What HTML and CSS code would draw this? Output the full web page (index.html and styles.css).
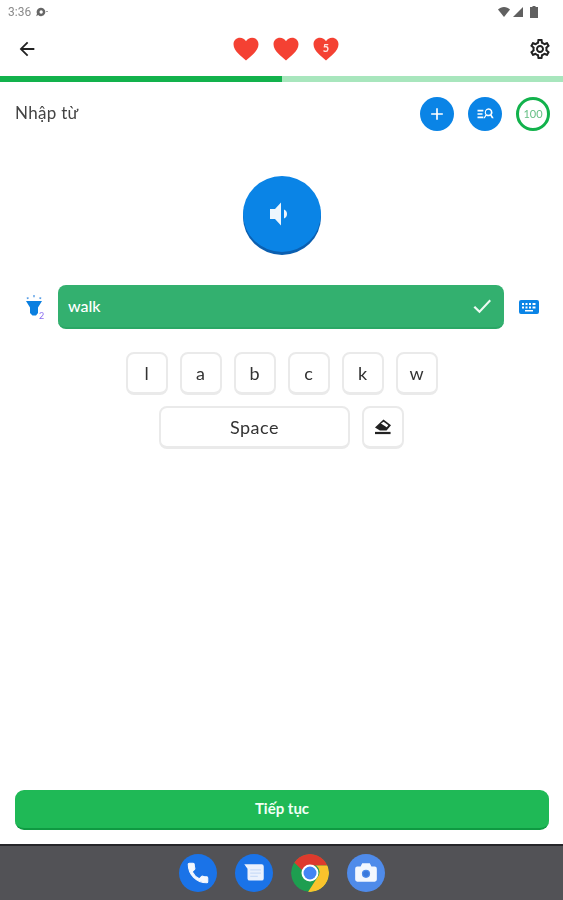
FILE: index.html
```html
<!DOCTYPE html>
<html lang="en">
<head>
  <meta charset="UTF-8">
  <title>Nhập từ</title>
  <link rel="stylesheet" href="styles.css">
</head>
<body>
  <svg class="defs" width="0" height="0">
    <symbol id="heart" viewBox="0 0 26 24">
      <path d="M13 23.5C9 19.6 .5 14.200 .5 7.300 .5 3.300 3.500 .8 6.900 .8c2.600 0 4.800 1.300 6.100 3.500C14.300 2.100 16.500 .8 19.100 .8c3.400 0 6.400 2.500 6.400 6.500 0 6.900-8.500 12.300-12.500 16.200z"/>
    </symbol>
  </svg>

  <div class="status-bar">
    <div class="status-left">
      <span class="clock">3:36</span>
      <svg class="status-note" viewBox="0 0 14 12" width="12" height="10"><path d="M6 1a5 5 0 1 1-3.600 8.500L0 11l1-3A5 5 0 0 1 6 1zm0 3a2 2 0 1 0 0 4 2 2 0 0 0 0-4zm6 1h2v1h-2z"/></svg>
    </div>
    <div class="status-right">
      <svg viewBox="0 0 12 10" width="12" height="10"><path d="M0 2.500C1.600 1 3.700 0 6 0s4.400 1 6 2.500L6 10z"/></svg>
      <svg viewBox="0 0 10 10" width="10" height="10"><path d="M10 0v10H0z"/></svg>
      <svg class="battery" viewBox="0 0 8 12" width="8" height="12"><path d="M2.500 0h3v1H8v11H0V1h2.500z"/></svg>
    </div>
  </div>

  <header class="toolbar">
    <svg class="icon-back" viewBox="0 0 24 24" width="22" height="22"><path d="M20 11H7.830l5.590-5.590L12 4l-8 8 8 8 1.410-1.410L7.830 13H20v-2z"/></svg>
    <div class="hearts">
      <svg class="heart"><use href="#heart"/></svg>
      <svg class="heart"><use href="#heart"/></svg>
      <div class="heart-count">
        <svg class="heart"><use href="#heart"/></svg>
        <span>5</span>
      </div>
    </div>
    <svg class="icon-settings" viewBox="0 0 24 24" width="24" height="24"><path d="M19.430 12.980c.04-.32.07-.64.07-.98 0-.34-.03-.66-.07-.98l2.110-1.650c.19-.15.24-.42.12-.64l-2-3.460c-.09-.16-.26-.25-.44-.25-.06 0-.12.01-.17.03l-2.490 1c-.52-.4-1.080-.73-1.690-.98l-.38-2.650C14.460 2.180 14.250 2 14 2h-4c-.25 0-.46.18-.49.42l-.38 2.650c-.61.25-1.170.59-1.690.98l-2.490-1c-.06-.02-.12-.03-.18-.03-.17 0-.34.09-.43.25l-2 3.460c-.13.22-.07.49.12.64l2.110 1.650c-.04.32-.07.65-.07.98 0 .33.03.66.07.98l-2.110 1.650c-.19.15-.24.42-.12.64l2 3.460c.09.16.26.25.44.25.06 0 .12-.01.17-.03l2.490-1c.52.4 1.080.73 1.690.98l.38 2.650c.03.24.24.42.49.42h4c.25 0 .46-.18.49-.42l.38-2.650c.61-.25 1.170-.59 1.690-.98l2.490 1c.06.02.12.03.18.03.17 0 .34-.09.43-.25l2-3.460c.12-.22.07-.49-.12-.64l-2.110-1.650zm-1.980-1.710c.04.31.05.52.05.73 0 .21-.02.43-.05.73l-.14 1.130.89.7 1.080.84-.7 1.210-1.270-.51-1.040-.42-.9.68c-.43.32-.84.56-1.250.73l-1.060.43-.16 1.130-.2 1.350h-1.400l-.19-1.350-.16-1.130-1.060-.43c-.43-.18-.83-.41-1.230-.71l-.91-.7-1.060.43-1.270.51-.7-1.210 1.080-.84.89-.7-.14-1.130c-.03-.31-.05-.54-.05-.74s.02-.43.05-.73l.14-1.130-.89-.7-1.080-.84.7-1.210 1.270.51 1.040.42.9-.68c.43-.32.84-.56 1.250-.73l1.060-.43.16-1.130.2-1.350h1.390l.19 1.350.16 1.130 1.060.43c.43.18.83.41 1.230.71l.91.7 1.060-.43 1.270-.51.7 1.210-1.070.85-.89.7.14 1.130zM12 8c-2.210 0-4 1.790-4 4s1.790 4 4 4 4-1.790 4-4-1.790-4-4-4zm0 6c-1.100 0-2-.9-2-2s.9-2 2-2 2 .9 2 2-.9 2-2 2z"/></svg>
  </header>

  <div class="progress"><div class="progress-fill"></div></div>

  <div class="title-row">
    <span class="title">Nhập từ</span>
    <div class="title-actions">
      <div class="round-btn">
        <svg viewBox="0 0 24 24" width="20" height="20"><path d="M11 5h2v6h6v2h-6v6h-2v-6H5v-2h6z"/></svg>
      </div>
      <div class="round-btn">
        <svg viewBox="0 0 24 24" width="20" height="20"><path d="M3 7h7v2H3zm0 4h6v2H3zm0 4h7v2H3z"/><path fill-rule="evenodd" d="M16 5a5 5 0 0 1 4 8l2.500 4h-2.300l-1.800-3a5 5 0 0 1-4.800 0l-1.800 3h-1.600l2.400-4.200A5 5 0 0 1 16 5zm0 2a3 3 0 1 0 0 6 3 3 0 0 0 0-6z"/></svg>
      </div>
      <div class="score"><span>100</span></div>
    </div>
  </div>

  <div class="speaker-wrap">
    <div class="speaker">
      <svg viewBox="0 0 24 30" width="24" height="30"><path d="M11 3.500v23L5 20H0V10h5z"/><path d="M14 10.500c2 .6 3 2.400 3 4.500s-1 3.900-3 4.500z"/></svg>
    </div>
  </div>

  <div class="answer-row">
    <div class="hint">
      <svg viewBox="0 0 20 24" width="20" height="24">
        <path class="hint-bulb" d="M1 7h16l-4 6.500V19l-2 2.500H7.500L5 19v-5.500z"/>
        <path class="hint-spark" d="M8.300 1h1.400v2.200H8.300zM1.500 3.800l1.700-.8.700 1.500-1.700.8zM16.500 3.800l-1.700-.8-.7 1.500 1.700.8z"/>
      </svg>
      <span class="hint-count">2</span>
    </div>
    <div class="answer">
      <span>walk</span>
      <svg viewBox="0 0 24 24" width="24" height="24"><path d="M3.500 13.500l1.600-1.600 4.400 4.300L19.500 5.500l1.500 1.500L9.500 19.300z"/></svg>
    </div>
    <svg class="icon-keyboard" viewBox="0 0 20 16" width="20" height="16">
      <path fill-rule="evenodd" d="M2 1h16a2 2 0 0 1 2 2v10a2 2 0 0 1-2 2H2a2 2 0 0 1-2-2V3a2 2 0 0 1 2-2zm1 3v2h2V4zm3.500 0v2h2V4zM10 4v2h2V4zm3.500 0v2h3V4zM3 7.500v2h2v-2zm3.500 0v2h2v-2zm3.500 0v2h2v-2zm3.500 0v2h3v-2zM6 11v1.500h8V11z"/>
    </svg>
  </div>

  <div class="keys">
    <div class="key-row">
      <div class="key">l</div>
      <div class="key">a</div>
      <div class="key">b</div>
      <div class="key">c</div>
      <div class="key">k</div>
      <div class="key">w</div>
    </div>
    <div class="key-row">
      <div class="key key-space">Space</div>
      <div class="key">
        <svg viewBox="0 0 20 18" width="18" height="16"><path d="M10.500 .5L19 7l-5 6H6.500L1 9.500z"/><path class="erase-cut" d="M10.700 3L16 7l-1.800 2.200-6.500-4z"/><path d="M1 14.500h17.500V17H1z"/></svg>
      </div>
    </div>
  </div>

  <div class="spacer"></div>

  <div class="continue">Tiếp tục</div>

  <nav class="dock">
    <div class="app app-blue">
      <svg class="phone" viewBox="0 0 24 24" width="26" height="26"><path d="M6.620 10.790c1.440 2.830 3.760 5.140 6.590 6.590l2.200-2.200c.27-.27.67-.36 1.020-.24 1.120.37 2.330.57 3.570.57.55 0 1 .45 1 1V20c0 .55-.45 1-1 1-9.390 0-17-7.610-17-17 0-.55.45-1 1-1h3.500c.55 0 1 .45 1 1 0 1.250.2 2.450.57 3.570.11.35.03.74-.25 1.020l-2.200 2.200z"/></svg>
    </div>
    <div class="app app-blue">
      <svg viewBox="0 0 24 24" width="26" height="26"><path class="msg-body" d="M3 4h16a2 2 0 0 1 2 2v11a2 2 0 0 1-2 2H8a2 2 0 0 1-2-2V8z"/><path class="msg-line" d="M8.500 8.500h10v1.300h-10zm0 3h10v1.300h-10zm0 3h7v1.300h-7z"/></svg>
    </div>
    <div class="app">
      <svg viewBox="0 0 38 38" width="38" height="38">
        <circle cx="19" cy="19" r="19" fill="#1e9e50"/>
        <path d="M3.200 8.500A19 19 0 0 1 36.500 11.500H19a8 8 0 0 0-7.500 5z" fill="#dd3a2d"/>
        <path d="M36.500 11.500A19 19 0 0 1 17 37.900L26 24a8 8 0 0 0-1-12.500z" fill="#f9c32c"/>
        <circle cx="19" cy="19" r="8.500" fill="#fff"/>
        <circle cx="19" cy="19" r="6.500" fill="#4285f4"/>
      </svg>
    </div>
    <div class="app app-camera">
      <svg viewBox="0 0 24 24" width="26" height="26"><path fill-rule="evenodd" d="M8.500 3h7L17 6h3a2 2 0 0 1 2 2v10a2 2 0 0 1-2 2H4a2 2 0 0 1-2-2V8a2 2 0 0 1 2-2h3zM12 9a3.800 3.800 0 1 0 0 7.600A3.800 3.800 0 0 0 12 9z"/><circle class="cam-lens" cx="12" cy="12.800" r="2.600"/></svg>
    </div>
  </nav>
</body>
</html>
```

FILE: styles.css
```css
html, body {
  margin: 0;
  padding: 0;
}
body {
  width: 563px;
  height: 900px;
  display: flex;
  flex-direction: column;
  overflow: hidden;
  background: #fff;
  font-family: Lato, "Noto Sans", sans-serif;
  color: #333;
  filter: blur(.4px);
}
.defs {
  position: absolute;
}

/* status bar */
.status-bar {
  height: 24px;
  flex: none;
  display: flex;
  justify-content: space-between;
  align-items: center;
  padding: 0 25px 0 8px;
}
.status-left, .status-right {
  display: flex;
  align-items: center;
}
.status-left {
  gap: 5px;
}
.status-right {
  gap: 3px;
}
.clock {
  font-family: Roboto, sans-serif;
  font-size: 12px;
  color: #8a8a8a;
}
.status-note {
  fill: #666;
}
.status-right svg {
  fill: #606060;
}
.status-right .battery {
  margin-left: 4px;
}

/* toolbar */
.toolbar {
  height: 50px;
  flex: none;
  display: flex;
  justify-content: space-between;
  align-items: center;
  padding: 0 11px 0 16px;
}
.icon-back, .icon-settings {
  fill: #222;
}
.hearts {
  display: flex;
  gap: 14px;
  margin-left: 6px;
}
.heart {
  width: 26px;
  height: 24px;
  display: block;
  fill: #f44133;
}
.heart-count {
  position: relative;
}
.heart-count span {
  position: absolute;
  left: 0;
  right: 0;
  top: 4px;
  text-align: center;
  font-size: 11px;
  font-weight: 700;
  color: #ffe3df;
}

/* progress */
.progress {
  height: 6px;
  flex: none;
  margin-top: 2px;
  background: #a8e6bd;
}
.progress-fill {
  width: 282px;
  height: 100%;
  background: #12b24c;
}

/* title row */
.title-row {
  height: 64px;
  flex: none;
  display: flex;
  justify-content: space-between;
  align-items: center;
  padding: 0 13px 0 15px;
}
.title {
  font-size: 17px;
  letter-spacing: .3px;
  color: #444;
  padding-bottom: 3px;
}
.title-actions {
  display: flex;
  gap: 14px;
}
.round-btn {
  width: 34px;
  height: 34px;
  border-radius: 50%;
  background: #0a84e6;
  display: flex;
  align-items: center;
  justify-content: center;
  fill: #fff;
}
.score {
  width: 34px;
  height: 34px;
  box-sizing: border-box;
  border: 3px solid #12b24c;
  border-radius: 50%;
  display: flex;
  align-items: center;
  justify-content: center;
  font-size: 11px;
  color: #66bf85;
}
.score span {
  padding-bottom: 2px;
}

/* speaker */
.speaker-wrap {
  display: flex;
  justify-content: center;
  padding-top: 30px;
}
.speaker {
  width: 78px;
  height: 76px;
  border-radius: 50%;
  background: #0a84e6;
  box-shadow: 0 3px 0 #0b5fb0;
  display: flex;
  align-items: center;
  justify-content: center;
  fill: #eef6fd;
}

/* answer */
.answer-row {
  display: flex;
  align-items: center;
  margin-top: 33px;
  height: 44px;
  padding: 0 24px 0 25px;
}
.hint {
  width: 33px;
  flex: none;
  position: relative;
  height: 26px;
}
.hint-bulb {
  fill: #0a7fe0;
}
.hint-spark {
  fill: #5a9fe6;
}
.hint-count {
  position: absolute;
  left: 14px;
  bottom: -1px;
  font-size: 9px;
  color: #8a6cf0;
}
.answer {
  flex: 1;
  height: 44px;
  box-sizing: border-box;
  background: #33b06f;
  border-radius: 8px;
  border-bottom: 2px solid #2aa765;
  display: flex;
  align-items: center;
  justify-content: space-between;
  padding: 0 10px;
  color: #fff;
  font-size: 16px;
  font-weight: 500;
  fill: #eefaf3;
}
.answer span {
  padding-bottom: 2px;
}
.icon-keyboard {
  margin-left: 15px;
  fill: #0a84e6;
}

/* letter keys */
.keys {
  margin-top: 23px;
  display: flex;
  flex-direction: column;
  gap: 11px;
}
.key-row {
  display: flex;
  justify-content: center;
  gap: 12px;
}
.key {
  width: 42px;
  height: 43px;
  box-sizing: border-box;
  border: 2px solid #eaeaea;
  border-bottom-width: 3px;
  border-radius: 8px;
  background: #fff;
  display: flex;
  align-items: center;
  justify-content: center;
  font-size: 18px;
  color: #333;
  fill: #222;
}
.key-space {
  width: 191px;
  letter-spacing: .5px;
}
.erase-cut {
  fill: #fff;
}

.spacer {
  flex: 1;
}

/* continue */
.continue {
  margin: 0 14px 14px 15px;
  height: 40px;
  flex: none;
  box-sizing: border-box;
  background: #1fb956;
  border-bottom: 2px solid #0f9a42;
  border-radius: 9px;
  padding-bottom: 2px;
  display: flex;
  align-items: center;
  justify-content: center;
  color: #f2fff6;
  font-size: 15px;
  font-weight: 700;
}

/* dock */
.dock {
  height: 56px;
  flex: none;
  box-sizing: border-box;
  background: #525256;
  border-top: 2px solid #26262a;
  display: flex;
  justify-content: center;
  align-items: center;
  gap: 18px;
}
.app {
  width: 38px;
  height: 38px;
  border-radius: 50%;
  display: flex;
  align-items: center;
  justify-content: center;
  overflow: hidden;
}
.app-blue {
  background: #1a73e8;
  fill: #f3f7fe;
}
.phone {
  stroke: #f3f7fe;
  stroke-width: 1;
}
.app-camera {
  background: #4f8bea;
  fill: #f3f7fe;
}
.cam-lens {
  fill: #3a78dc;
}
.msg-body {
  fill: #eaf1fd;
}
.msg-line {
  fill: #c9dcf8;
}
```
